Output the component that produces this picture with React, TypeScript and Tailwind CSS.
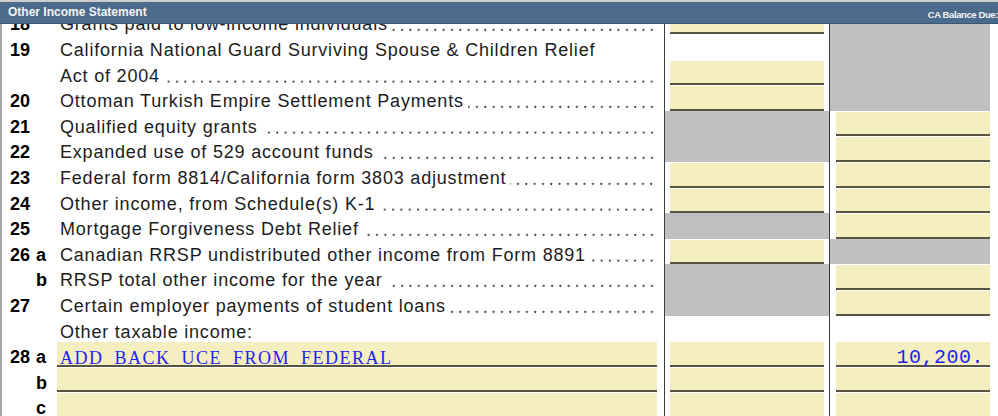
type Fill = 'y' | 'g' | 'w'

type Line = {
  num?: string
  sub?: string
  text?: string
  dots?: boolean
  c1: Fill
  c2: Fill
  input?: string
  amount?: string
}

const lines: Line[] = [
  { num: '18', text: 'Grants paid to low-income individuals', dots: true, c1: 'y', c2: 'g' },
  { num: '19', text: 'California National Guard Surviving Spouse & Children Relief', c1: 'w', c2: 'g' },
  { text: 'Act of 2004', dots: true, c1: 'y', c2: 'g' },
  { num: '20', text: 'Ottoman Turkish Empire Settlement Payments', dots: true, c1: 'y', c2: 'g' },
  { num: '21', text: 'Qualified equity grants', dots: true, c1: 'g', c2: 'y' },
  { num: '22', text: 'Expanded use of 529 account funds', dots: true, c1: 'g', c2: 'y' },
  { num: '23', text: 'Federal form 8814/California form 3803 adjustment', dots: true, c1: 'y', c2: 'y' },
  { num: '24', text: 'Other income, from Schedule(s) K-1', dots: true, c1: 'y', c2: 'y' },
  { num: '25', text: 'Mortgage Forgiveness Debt Relief', dots: true, c1: 'g', c2: 'y' },
  { num: '26', sub: 'a', text: 'Canadian RRSP undistributed other income from Form 8891', dots: true, c1: 'y', c2: 'g' },
  { sub: 'b', text: 'RRSP total other income for the year', dots: true, c1: 'g', c2: 'y' },
  { num: '27', text: 'Certain employer payments of student loans', dots: true, c1: 'g', c2: 'y' },
  { text: 'Other taxable income:', c1: 'w', c2: 'w' },
  { num: '28', sub: 'a', input: 'ADD BACK UCE FROM FEDERAL', c1: 'y', c2: 'y', amount: '10,200.' },
  { sub: 'b', input: '', c1: 'y', c2: 'y' },
  { sub: 'c', input: '', c1: 'y', c2: 'y' },
]

const field = 'h-[calc(100%-1px)] mt-px bg-[#f4eec0] border-b-2 border-[#57543f]'

function AmountCell({ fill, pad, amount }: { fill: Fill; pad: string; amount?: string }) {
  if (fill === 'g') return <div className="h-full bg-[#c0c0c0]" />
  if (fill === 'w') return <div className="h-full" />
  return (
    <div className={`h-full ${pad}`}>
      <div className={`${field} flex justify-end pr-[6px] pt-[6px]`}>
        {amount && (
          <span className="font-['Liberation_Mono',monospace] text-[20px] leading-[20px] tracking-[0.5px] text-[#1f1ff5]">
            {amount}
          </span>
        )}
      </div>
    </div>
  )
}

function Row({ line }: { line: Line }) {
  const isInput = line.input !== undefined
  return (
    <div className="flex h-[25.6px]">
      <div className="flex w-[55px] shrink-0 pl-[8px] pt-[6px] text-[18px] font-bold leading-[20px] text-black">
        <span className="w-[26px]">{line.num}</span>
        <span>{line.sub}</span>
      </div>

      {isInput ? (
        <div className={`${field} w-[600px] shrink-0 pl-[3px] pt-[5px]`}>
          <span className="whitespace-nowrap font-['Liberation_Serif',serif] text-[18px] leading-[20px] tracking-[1.5px] [word-spacing:5px] text-[#1f1ff5]">
            {line.input}
          </span>
        </div>
      ) : (
        <div className="flex h-full w-[600px] shrink-0 pl-[3px] pr-[1px]">
          <span className="whitespace-nowrap pt-[6px] text-[18px] leading-[20px] tracking-[0.8px] text-[#1c1c1c]">
            {line.text}
          </span>
          {line.dots && (
            <span className="ml-[4px] h-full flex-1 bg-[radial-gradient(circle_at_4px_21.5px,#43392c_0.8px,transparent_1.3px)] bg-[length:8.33px_25.6px] bg-right-top bg-repeat-x" />
          )}
        </div>
      )}

      <div className="w-[7px] shrink-0" />
      <div className="h-full w-[166px] shrink-0 border-x border-[#3c3c3c]">
        <AmountCell fill={line.c1} pad="px-[5px]" />
      </div>
      <div className="h-full w-[160px] shrink-0">
        <AmountCell fill={line.c2} pad="pl-[6px]" amount={line.amount} />
      </div>
    </div>
  )
}

export default function App() {
  return (
    <div className="h-[416px] w-[998px] overflow-hidden bg-white font-['Liberation_Sans',Arial,sans-serif]">
      {/* Title bar */}
      <div className="flex h-[24px] justify-between border-t-2 border-b border-t-[#cdcdcd] border-b-[#3b5671] bg-[#4a6b8b]">
        <span className="pl-[8px] pt-[3px] text-[12px] font-bold leading-[14px] text-[#f4f4f4]">
          Other Income Statement
        </span>
        <span className="whitespace-nowrap pt-[7px] text-[9.5px] font-bold leading-[11px] tracking-[-0.4px] text-[#f4f4f4]">
          CA Balance Due:
        </span>
      </div>

      {/* Form lines, scrolled so line 18 is cut off */}
      <div className="h-[392px] overflow-hidden border-l-2 border-[#a4a4a4]">
        <div className="-mt-[15.6px]">
          {lines.map((line, i) => (
            <Row key={i} line={line} />
          ))}
        </div>
      </div>
    </div>
  )
}
